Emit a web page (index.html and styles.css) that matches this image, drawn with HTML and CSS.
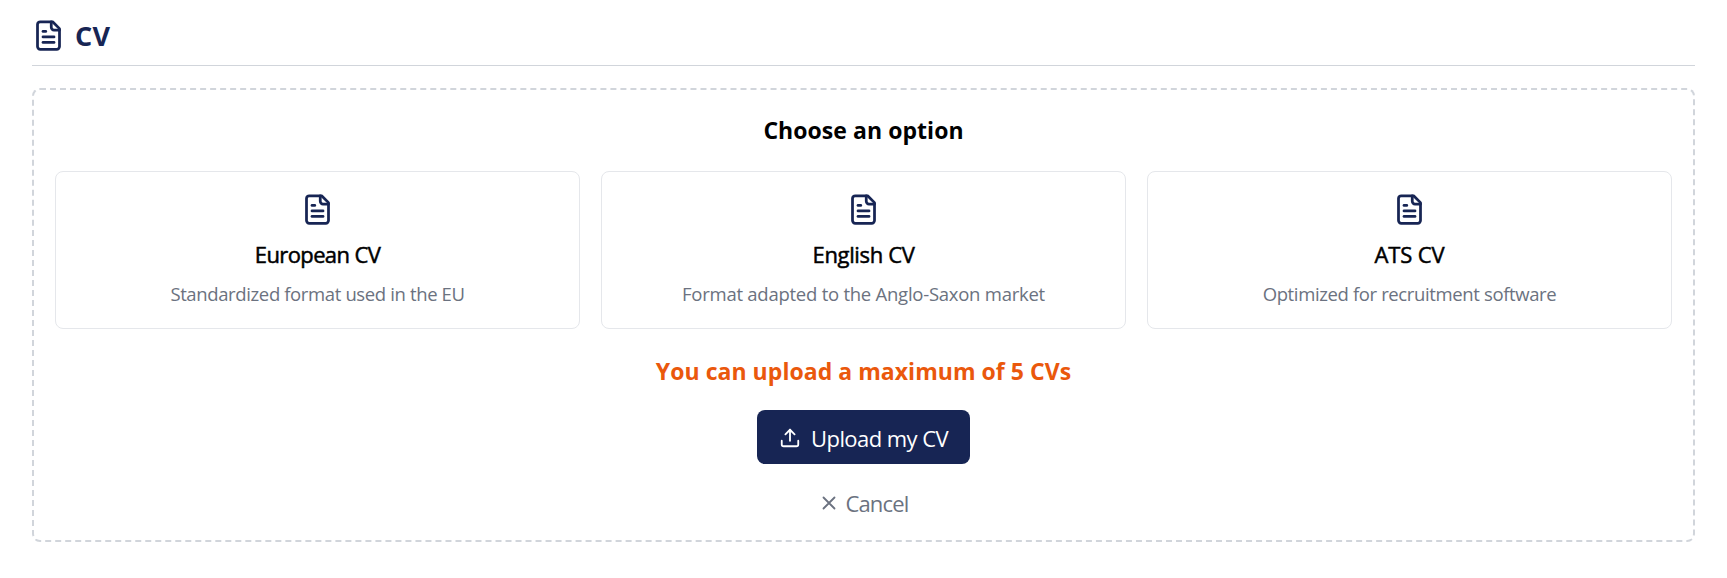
FILE: index.html
```html
<!DOCTYPE html>
<html lang="en">
<head>
<meta charset="utf-8">
<title>CV</title>
<link rel="stylesheet" href="styles.css">
</head>
<body>
<svg class="sprite" width="0" height="0">
  <symbol id="file-text" viewBox="0 0 24 24">
    <path d="M15 2H6a2 2 0 0 0-2 2v16a2 2 0 0 0 2 2h12a2 2 0 0 0 2-2V7Z"/>
    <path d="M14 2v4a2 2 0 0 0 2 2h4"/>
    <path d="M10 9H8"/><path d="M16 13H8"/><path d="M16 17H8"/>
  </symbol>
</svg>
<main class="page">
  <header class="header">
    <svg class="icon"><use href="#file-text"/></svg>
    <h1 class="title">CV</h1>
  </header>
  <section class="panel">
    <h2 class="heading">Choose an option</h2>
    <div class="cards">
      <article class="card european">
        <svg class="icon"><use href="#file-text"/></svg>
        <h3 class="card-title">European CV</h3>
        <p class="card-text">Standardized format used in the EU</p>
      </article>
      <article class="card english">
        <svg class="icon"><use href="#file-text"/></svg>
        <h3 class="card-title">English CV</h3>
        <p class="card-text">Format adapted to the Anglo-Saxon market</p>
      </article>
      <article class="card ats">
        <svg class="icon"><use href="#file-text"/></svg>
        <h3 class="card-title">ATS CV</h3>
        <p class="card-text">Optimized for recruitment software</p>
      </article>
    </div>
    <p class="notice">You can upload a maximum of 5 CVs</p>
    <button class="upload">
      <svg class="action-icon" viewBox="0 0 24 24"><path d="M21 15v4a2 2 0 0 1-2 2H5a2 2 0 0 1-2-2v-4"/><path d="M17 8l-5-5-5 5"/><path d="M12 3v12"/></svg>
      <span>Upload my CV</span>
    </button>
    <button class="cancel">
      <svg class="action-icon" viewBox="0 0 24 24"><path d="M18 6L6 18M6 6l12 12"/></svg>
      <span>Cancel</span>
    </button>
  </section>
</main>
</body>
</html>
```
FILE: styles.css
```css
* { box-sizing: border-box; margin: 0; padding: 0; }
body { background: #fff; color: #000; font-family: "Open Sans", "Noto Sans", sans-serif; }
.sprite { display: block; position: absolute; }
.page { padding: 0 32px; }
.header { display: flex; align-items: center; gap: 10px; height: 66px; padding-top: 5px; border-bottom: 1px solid #d1d5db; }
.icon { display: block; width: 33px; height: 33px; fill: none; stroke: #172554; stroke-width: 2; stroke-linecap: round; stroke-linejoin: round; }
.title { padding-top: 1px; font-size: 27px; line-height: 36px; font-weight: 700; letter-spacing: 0.2px; color: #172554; }
.panel { display: flex; flex-direction: column; align-items: center; height: 454px; margin-top: 22px; padding: 22px 21px 0; border: 2px dashed #d1d5db; border-radius: 8px; }
.heading { font-size: 23px; line-height: 36px; font-weight: 700; letter-spacing: 0.05px; }
.cards { display: grid; grid-template-columns: repeat(3, 1fr); gap: 21px; width: 100%; margin-top: 23px; }
.card { display: flex; flex-direction: column; align-items: center; height: 158px; padding-top: 21px; border: 1px solid #e5e7eb; border-radius: 8px; }
.card-title { margin-top: 12px; font-size: 22px; line-height: 32px; font-weight: 500; -webkit-text-stroke: 0.5px currentColor; }
.card-text { margin-top: 10px; font-size: 18.5px; line-height: 28px; color: #6b7280; }
.european .card-title { letter-spacing: -0.62px; }
.european .card-text, .ats .card-text { letter-spacing: -0.37px; }
.english .card-title { letter-spacing: -0.35px; }
.english .card-text { letter-spacing: -0.25px; }
.ats .card-title { letter-spacing: -0.15px; }
.notice { margin-top: 25px; font-size: 23px; line-height: 34px; font-weight: 700; letter-spacing: 0.04px; color: #ea580c; }
.upload, .cancel { display: flex; align-items: center; border: 0; font: 400 22px/32px "Open Sans", "Noto Sans", sans-serif; white-space: nowrap; }
.upload { gap: 10px; width: 213px; height: 54px; margin-top: 22px; padding: 1px 0 0 22px; border-radius: 8px; background: #172554; color: #fff; letter-spacing: -0.56px; }
.cancel { gap: 5px; margin-top: 23px; background: none; color: #6b7280; letter-spacing: -0.8px; }
.action-icon { width: 22px; height: 22px; fill: none; stroke: currentColor; stroke-width: 2; stroke-linecap: round; stroke-linejoin: round; }
.cancel .action-icon { margin-top: -1px; }
```
